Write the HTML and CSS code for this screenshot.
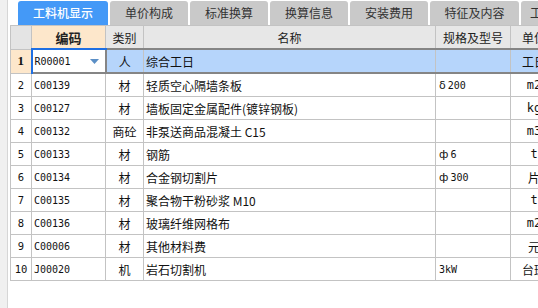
FILE: index.html
```html
<!DOCTYPE html>
<html lang="zh">
<head>
<meta charset="utf-8">
<title>工料机显示</title>
<link rel="stylesheet" href="styles.css">
</head>
<body>
<div class="app">
  <div class="side"></div>
  <div class="main">
    <div class="tabs">
      <div class="tab active w90">工料机显示</div>
      <div class="tab w78">单价构成</div>
      <div class="tab w78">标准换算</div>
      <div class="tab w78">换算信息</div>
      <div class="tab w78">安装费用</div>
      <div class="tab w89">特征及内容</div>
      <div class="tab w78">工程量明细</div>
    </div>
    <div class="gridwrap">
      <table class="grid">
        <colgroup>
          <col class="c-no"><col class="c-code"><col class="c-type"><col class="c-name"><col class="c-spec"><col class="c-unit">
        </colgroup>
        <thead>
          <tr>
            <th class="corner"></th>
            <th class="hsel">编码</th>
            <th>类别</th>
            <th>名称</th>
            <th>规格及型号</th>
            <th>单位</th>
          </tr>
        </thead>
        <tbody>
          <tr class="sel">
            <td class="no nosel">1</td>
            <td class="code edit"><div class="editbox"><span>R00001</span><svg class="dd" width="9" height="5" viewBox="0 0 9 5"><polygon points="0,0 9,0 4.5,5" fill="#5b8fc6"/></svg></div></td>
            <td class="type">人</td>
            <td class="name">综合工日</td>
            <td class="spec"></td>
            <td class="unit">工日</td>
          </tr>
          <tr><td class="no">2</td><td class="code">C00139</td><td class="type">材</td><td class="name">轻质空心隔墙条板</td><td class="spec"><span class="sym">δ</span>200</td><td class="unit">m2</td></tr>
          <tr><td class="no">3</td><td class="code">C00127</td><td class="type">材</td><td class="name">墙板固定金属配件(镀锌钢板)</td><td class="spec"></td><td class="unit">kg</td></tr>
          <tr><td class="no">4</td><td class="code">C00132</td><td class="type">商砼</td><td class="name">非泵送商品混凝土 C15</td><td class="spec"></td><td class="unit">m3</td></tr>
          <tr><td class="no">5</td><td class="code">C00133</td><td class="type">材</td><td class="name">钢筋</td><td class="spec"><span class="sym">ф</span>6</td><td class="unit">t</td></tr>
          <tr><td class="no">6</td><td class="code">C00134</td><td class="type">材</td><td class="name">合金钢切割片</td><td class="spec"><span class="sym">ф</span>300</td><td class="unit">片</td></tr>
          <tr><td class="no">7</td><td class="code">C00135</td><td class="type">材</td><td class="name">聚合物干粉砂浆 M10</td><td class="spec"></td><td class="unit">t</td></tr>
          <tr><td class="no">8</td><td class="code">C00136</td><td class="type">材</td><td class="name">玻璃纤维网格布</td><td class="spec"></td><td class="unit">m2</td></tr>
          <tr><td class="no">9</td><td class="code">C00006</td><td class="type">材</td><td class="name">其他材料费</td><td class="spec"></td><td class="unit">元</td></tr>
          <tr><td class="no">10</td><td class="code">J00020</td><td class="type">机</td><td class="name">岩石切割机</td><td class="spec">3kW</td><td class="unit">台班</td></tr>
        </tbody>
      </table>
    </div>
  </div>
</div>
</body>
</html>
```
FILE: styles.css
```css
html, body {
  margin: 0;
  padding: 0;
  background: #ffffff;
  width: 538px;
  height: 308px;
  overflow: hidden;
}
.app {
  display: flex;
  width: 538px;
  height: 308px;
  font-family: "Noto Sans CJK SC", "DejaVu Sans", sans-serif;
  font-size: 12px;
  color: #111;
}
.side {
  width: 7px;
  flex: none;
  background: #f0f0f0;
  border-right: 1px solid #d6d6d6;
}
.main {
  flex: 1;
  min-width: 0;
  padding-left: 2px;
  overflow: hidden;
}
.tabs {
  display: flex;
  gap: 2px;
  margin-top: 1px;
  margin-left: 8px;
  height: 24px;
  white-space: nowrap;
}
.tab {
  flex: none;
  height: 24px;
  line-height: 24px;
  text-align: center;
  background: #c9c9c9;
  color: #333;
  border-radius: 3px 3px 0 0;
  font-size: 12px;
}
.tab.active {
  background: #4499f7;
  color: #fff;
  font-weight: 500;
}
.w90 { width: 90px; }
.w78 { width: 78px; }
.w89 { width: 89px; }
.gridwrap {
  width: 560px;
}
.grid {
  table-layout: fixed;
  border-collapse: collapse;
  width: 547px;
}
.c-no { width: 21px; }
.c-code { width: 74px; }
.c-type { width: 38px; }
.c-name { width: 292px; }
.c-spec { width: 75px; }
.c-unit { width: 47px; }
.grid th, .grid td {
  border: 1px solid #c3c3c3;
  height: 22px;
  padding: 0;
  white-space: nowrap;
  overflow: hidden;
}
.grid th {
  background: #e7e7e7;
  font-weight: normal;
  color: #222;
  font-size: 12px;
  text-align: center;
}
.grid th.corner { background: #e4e4e4; }
.grid th.hsel {
  background: #fde7cb;
  font-weight: bold;
  font-size: 13px;
  border-bottom: 2px solid #1e6fe3;
}
.no {
  text-align: center;
  font-family: "DejaVu Sans Mono", monospace;
  font-size: 10.5px;
}
.code {
  font-family: "DejaVu Sans Mono", monospace;
  font-size: 10px;
  padding-left: 2px !important;
}
.type { text-align: center; }
.name { padding-left: 2px !important; }
.spec {
  font-family: "DejaVu Sans Mono", monospace;
  font-size: 10px;
  padding-left: 3px !important;
}
.sym {
  font-family: "DejaVu Sans", sans-serif;
  font-size: 11px;
  margin-right: 2px;
}
.unit {
  text-align: center;
  font-family: "DejaVu Sans Mono", "Noto Sans CJK SC", monospace;
}
.sel td {
  background: #b6d5fb;
  border-top: 2px solid #858585;
  border-bottom: 2px solid #858585;
}
.sel td.nosel {
  background: #fde7cb;
  border-top: 1px solid #c3c3c3;
  border-bottom: 1px solid #c3c3c3;
  border-right: 2px solid #1e6fe3;
  font-family: "Liberation Serif", serif;
  font-weight: bold;
  font-size: 13px;
}
.sel td.edit {
  background: #ffffff;
  border-right: 2px solid #858585;
}
.editbox {
  display: flex;
  align-items: center;
  justify-content: space-between;
  padding-right: 6px;
}
.dd { display: block; }
```
